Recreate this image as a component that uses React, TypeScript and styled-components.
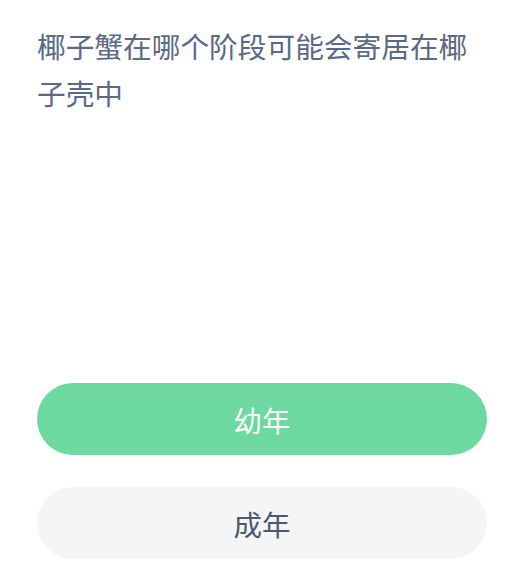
import * as React from "react";
import styled, { createGlobalStyle } from "styled-components";

const GlobalStyle = createGlobalStyle`
  html, body {
    margin: 0;
    padding: 0;
    background: #ffffff;
  }
  body {
    font-family: "Noto Sans CJK SC", "Noto Sans", sans-serif;
  }
`;

const Page = styled.div`
  width: 522px;
  height: 584px;
  box-sizing: border-box;
  padding: 22px 35px 0 37px;
  display: flex;
  flex-direction: column;
`;

const Question = styled.h1`
  margin: 0;
  width: 446px;
  font-size: 28.7px;
  font-weight: 400;
  line-height: 47px;
  color: #5b6987;
`;

const Options = styled.div`
  margin-top: 267px;
  display: flex;
  flex-direction: column;
  gap: 32px;
`;

const OptionButton = styled.button<{ $selected?: boolean }>`
  appearance: none;
  border: none;
  width: 100%;
  height: 72px;
  border-radius: 36px;
  font-family: inherit;
  font-size: 28.5px;
  font-weight: 400;
  background-color: ${(p) => (p.$selected ? "#6dd89f" : "#f4f5f7")};
  color: ${(p) => (p.$selected ? "#ffffff" : "#4d5770")};
  display: flex;
  align-items: center;
  justify-content: center;
  padding: 0;
`;

const options = [
  { label: "幼年", selected: true },
  { label: "成年", selected: false },
];

export default function App() {
  return (
    <>
      <GlobalStyle />
      <Page>
        <Question>椰子蟹在哪个阶段可能会寄居在椰子壳中</Question>
        <Options>
          {options.map((o) => (
            <OptionButton key={o.label} $selected={o.selected}>
              {o.label}
            </OptionButton>
          ))}
        </Options>
      </Page>
    </>
  );
}
